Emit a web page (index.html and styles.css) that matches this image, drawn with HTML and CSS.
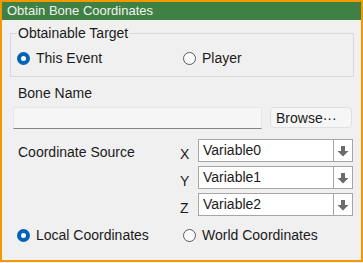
FILE: index.html
```html
<!DOCTYPE html>
<html lang="en">

<head>
    <meta charset="UTF-8">
    <title>Obtain Bone Coordinates</title>
    <link rel="stylesheet" href="styles.css">
</head>

<body>
    <div class="window">
        <div class="titlebar">Obtain Bone Coordinates</div>

        <fieldset class="group">
            <legend>Obtainable Target</legend>
            <div class="radio-row">
                <label class="radio checked"><span class="dot"></span>This Event</label>
                <label class="radio"><span class="dot"></span>Player</label>
            </div>
        </fieldset>

        <div class="field-label">Bone Name</div>
        <div class="bone-row">
            <div class="textbox"></div>
            <button class="browse">Browse&middot;&middot;&middot;</button>
        </div>

        <div class="coords">
            <div class="coords-title">Coordinate Source</div>
            <div class="axis">X</div>
            <div class="combo"><span class="combo-value">Variable0</span><span class="combo-arrow"><svg width="12" height="12" viewBox="0 0 12 12"><path d="M4 1h4v5h3.5L6 11.5L0.5 6H4z" fill="#6b6b6b"/></svg></span></div>
            <div></div>
            <div class="axis">Y</div>
            <div class="combo"><span class="combo-value">Variable1</span><span class="combo-arrow"><svg width="12" height="12" viewBox="0 0 12 12"><path d="M4 1h4v5h3.5L6 11.5L0.5 6H4z" fill="#6b6b6b"/></svg></span></div>
            <div></div>
            <div class="axis">Z</div>
            <div class="combo"><span class="combo-value">Variable2</span><span class="combo-arrow"><svg width="12" height="12" viewBox="0 0 12 12"><path d="M4 1h4v5h3.5L6 11.5L0.5 6H4z" fill="#6b6b6b"/></svg></span></div>
        </div>

        <div class="radio-row space">
            <label class="radio checked"><span class="dot"></span>Local Coordinates</label>
            <label class="radio"><span class="dot"></span>World Coordinates</label>
        </div>
    </div>
</body>

</html>
```

FILE: styles.css
```css
* {
    margin: 0;
    padding: 0;
    box-sizing: border-box;
}

body {
    background-color: #f0f0f0;
    font-family: 'Liberation Sans', Arial, sans-serif;
    font-size: 14px;
    color: #1b1b1b;
}

.window {
    width: 363px;
    height: 262px;
    border: 2px solid #f39800;
    background-color: #f0f0f0;
}

.titlebar {
    height: 18px;
    line-height: 18px;
    background-color: #3f8142;
    color: #f2f2f2;
    padding-left: 5px;
    font-size: 13px;
}

.group {
    margin: 5px 7px 0 8px;
    padding: 7px 6px 8px 6px;
    border: 1px solid #d9d9d9;
}

.group legend {
    padding: 0 1px;
    line-height: 16px;
}

.radio-row {
    display: flex;
    height: 20px;
    align-items: center;
}

.radio {
    display: flex;
    align-items: center;
    gap: 6px;
}

.group .radio:first-child {
    width: 166px;
}

.radio-row.space {
    margin-top: 9px;
    padding-left: 15px;
}

.radio-row.space .radio:first-child {
    width: 166px;
}

.dot {
    width: 13px;
    height: 13px;
    border-radius: 50%;
    border: 1px solid #5a5a5a;
    background-color: #fafafa;
}

.radio.checked .dot {
    border: 4px solid #0063b8;
    background-color: #ffffff;
}

.field-label {
    margin: 8px 0 0 16px;
    line-height: 16px;
}

.bone-row {
    display: flex;
    align-items: flex-start;
    margin: 6px 0 0 11px;
    gap: 8px;
}

.textbox {
    width: 249px;
    height: 22px;
    background-color: #f6f6f6;
    border: 1px solid #e6e6e6;
    border-bottom-color: #868686;
}

.browse {
    width: 82px;
    height: 21px;
    border: 1px solid #e0e0e0;
    border-radius: 4px;
    background-color: #f6f6f6;
    font-family: inherit;
    font-size: 14px;
    color: #1b1b1b;
    text-align: left;
    padding-left: 5px;
}

.coords {
    display: grid;
    grid-template-columns: 162px 18px 155px;
    grid-auto-rows: 23px;
    row-gap: 4px;
    margin: 10px 0 0 16px;
}

.coords-title,
.axis {
    padding-top: 5px;
    line-height: 16px;
}

.axis {
    padding-top: 7px;
}

.combo {
    display: flex;
    border: 1px solid #a6a6a6;
    background-color: #ffffff;
}

.combo-value {
    flex: 1;
    padding-left: 4px;
    line-height: 21px;
}

.combo-arrow {
    width: 19px;
    border-left: 1px solid #a6a6a6;
    display: flex;
    align-items: center;
    justify-content: center;
}
```
